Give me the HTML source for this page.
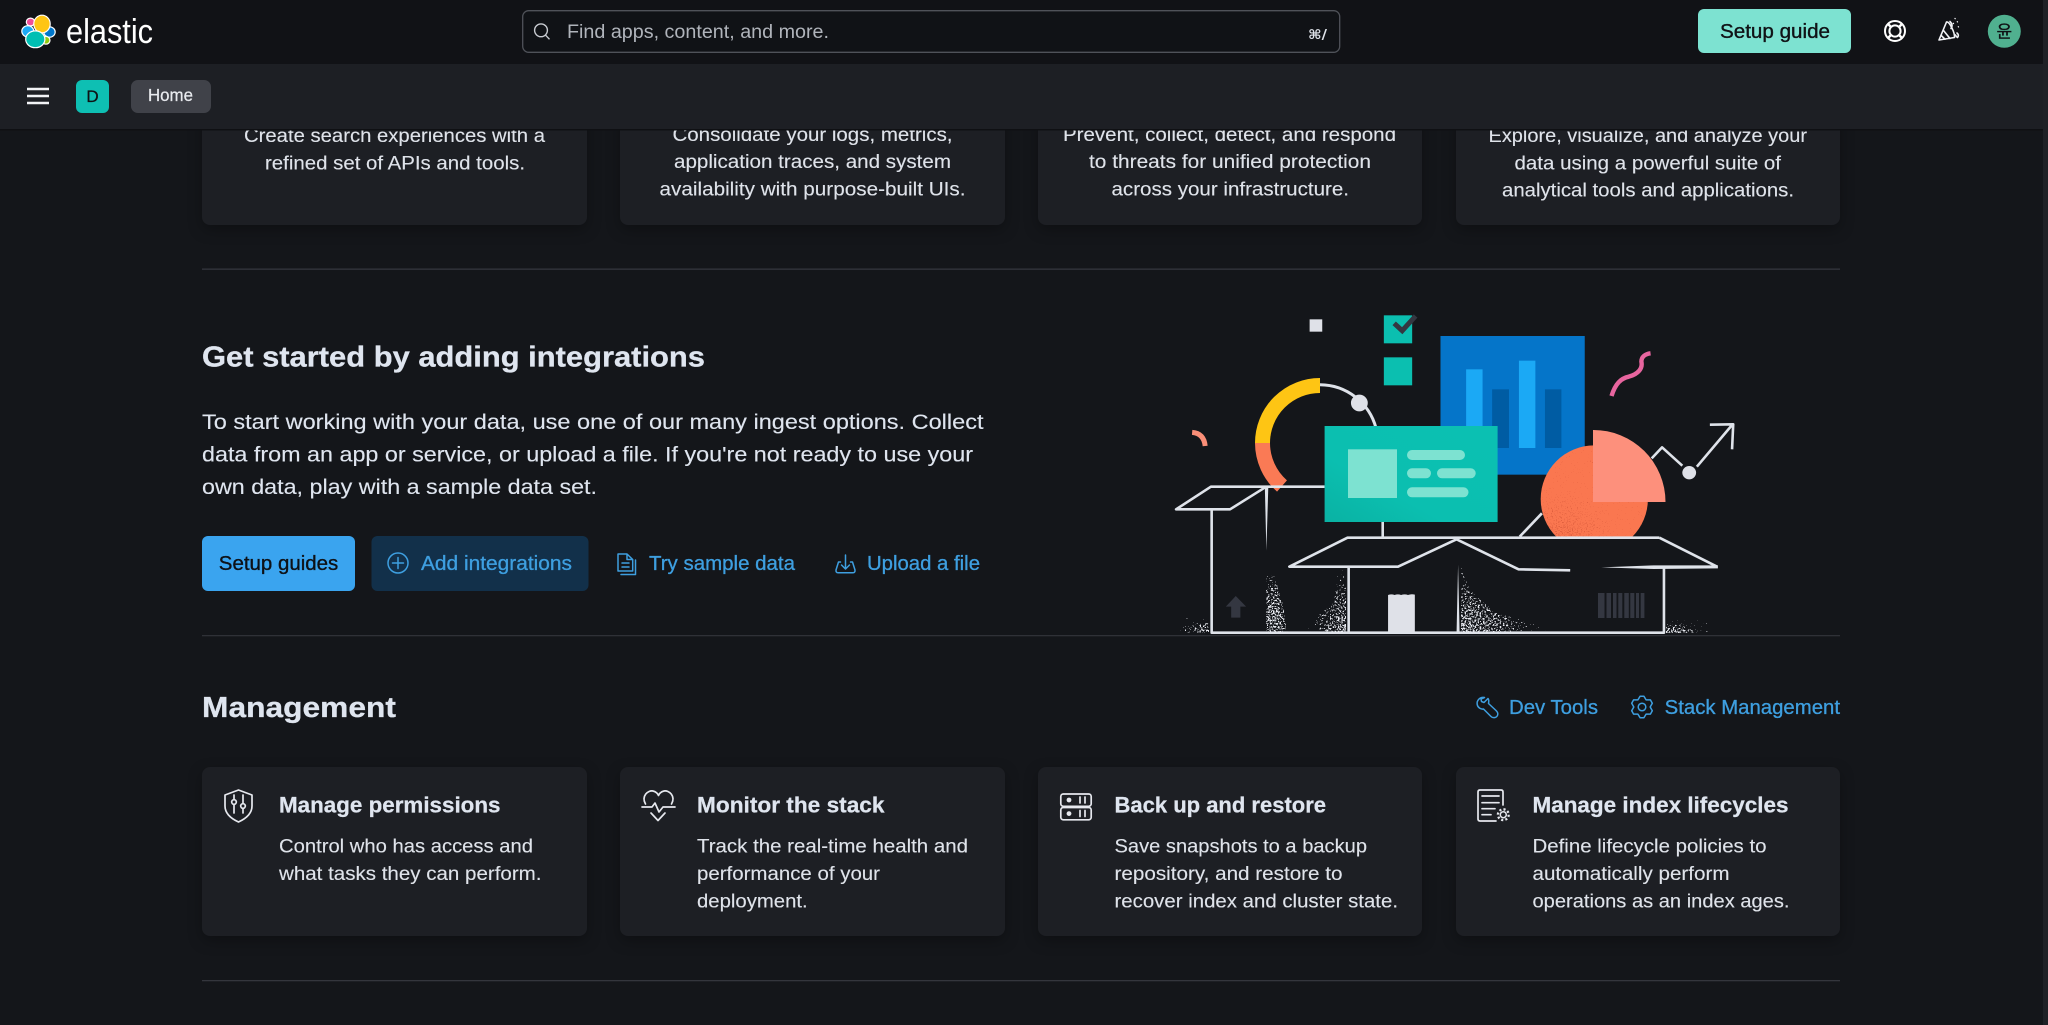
<!DOCTYPE html>
<html lang="en">
<head>
<meta charset="utf-8">
<title>Elastic Home</title>
<style>
html,body{margin:0;padding:0;background:#14161a;width:2048px;height:1025px;overflow:hidden}
svg{display:block;filter:blur(.3px)}
text{font-family:"Liberation Sans","Noto Sans CJK KR",sans-serif;white-space:pre}
.b{font-size:19px;fill:#dfe3ea;stroke:#dfe3ea;stroke-width:.12}
.p{font-size:21.5px;fill:#dfe5ef;stroke:#dfe5ef;stroke-width:.12}
.h{font-size:29px;font-weight:700;fill:#dfe5ef;stroke:#dfe5ef;stroke-width:.3}
.t{font-size:22px;font-weight:700;fill:#dfe5ef;stroke:#dfe5ef;stroke-width:.25}
.l{font-size:20px;fill:#3e9fe0;stroke:#3e9fe0;stroke-width:.3}
.ic{fill:none;stroke:#3e9fe0;stroke-width:1.5;stroke-linejoin:round;stroke-linecap:round}
.w{fill:none;stroke:#e6e8ee;stroke-width:1.7;stroke-linejoin:round;stroke-linecap:round}
.card{fill:#1d1f24;filter:drop-shadow(0 5px 7px rgba(0,0,0,.28))}
.art{fill:none;stroke:#dfe3ea;stroke-width:2.6;vector-effect:non-scaling-stroke;stroke-linejoin:round;stroke-linecap:butt}
.tp{fill:#dfe3ea}
</style>
</head>
<body>
<svg width="2048" height="1025" viewBox="0 0 2048 1025" xmlns="http://www.w3.org/2000/svg">
<defs>
<filter id="sp" x="0" y="0" width="1" height="1" color-interpolation-filters="sRGB">
<feTurbulence type="fractalNoise" baseFrequency=".6" numOctaves="2" seed="7" result="n"/>
<feColorMatrix in="n" type="matrix" values="0 0 0 0 1 0 0 0 0 1 0 0 0 0 1 1 0 0 0 0" result="a"/>
<feComposite in="a" in2="SourceGraphic" operator="arithmetic" k1="0" k2="1" k3="1" k4="-1" result="t"/>
<feComponentTransfer in="t" result="th"><feFuncA type="linear" slope="25"/></feComponentTransfer>
<feFlood flood-color="#e8eaf0"/>
<feComposite operator="in" in2="th"/>
</filter>
<filter id="spo" x="0" y="0" width="1" height="1" color-interpolation-filters="sRGB">
<feTurbulence type="fractalNoise" baseFrequency=".8" numOctaves="2" seed="4" result="n"/>
<feColorMatrix in="n" type="matrix" values="0 0 0 0 1 0 0 0 0 1 0 0 0 0 1 1 0 0 0 0" result="a"/>
<feComposite in="a" in2="SourceGraphic" operator="arithmetic" k1="0" k2="1" k3="1" k4="-1" result="t"/>
<feComponentTransfer in="t" result="th"><feFuncA type="linear" slope="25"/></feComponentTransfer>
<feFlood flood-color="#e0603f"/>
<feComposite operator="in" in2="th"/>
</filter>
<radialGradient id="rBR" cx="1" cy="1" r="1"><stop offset="0" stop-color="#fff" stop-opacity=".53"/><stop offset=".55" stop-color="#fff" stop-opacity=".41"/><stop offset="1" stop-color="#fff" stop-opacity=".25"/></radialGradient>
<radialGradient id="rBL" cx="0" cy="1" r="1"><stop offset="0" stop-color="#fff" stop-opacity=".53"/><stop offset=".55" stop-color="#fff" stop-opacity=".41"/><stop offset="1" stop-color="#fff" stop-opacity=".25"/></radialGradient>
<radialGradient id="rC" cx=".35" cy=".75" r=".85"><stop offset="0" stop-color="#fff" stop-opacity=".52"/><stop offset=".6" stop-color="#fff" stop-opacity=".43"/><stop offset="1" stop-color="#fff" stop-opacity=".26"/></radialGradient>
<radialGradient id="gO" cx=".2" cy=".95" r=".55"><stop offset="0" stop-color="#fff" stop-opacity=".52"/><stop offset="1" stop-color="#fff" stop-opacity=".26"/></radialGradient>
<linearGradient id="gT" x1="0" y1="1" x2="1" y2="0"><stop offset="0" stop-color="#0ab2a3"/><stop offset=".35" stop-color="#0bbfb0"/><stop offset="1" stop-color="#0bc0b2"/></linearGradient>
<clipPath id="orClip"><rect x="1500" y="400" width="200" height="137"/></clipPath>
</defs>

<rect width="2048" height="1025" fill="#14161a"/>

<!-- top feature cards -->
<rect class="card" x="202" y="90" width="385" height="135" rx="8"/>
<rect class="card" x="620" y="90" width="385" height="135" rx="8"/>
<rect class="card" x="1038" y="90" width="384" height="135" rx="8"/>
<rect class="card" x="1456" y="90" width="384" height="135" rx="8"/>

<text class="b" x="244" y="142" textLength="301" lengthAdjust="spacingAndGlyphs">Create search experiences with a</text>
<text class="b" x="265" y="169.5" textLength="260" lengthAdjust="spacingAndGlyphs">refined set of APIs and tools.</text>
<text class="b" x="672.5" y="141" textLength="280" lengthAdjust="spacingAndGlyphs">Consolidate your logs, metrics,</text>
<text class="b" x="674" y="168" textLength="277" lengthAdjust="spacingAndGlyphs">application traces, and system</text>
<text class="b" x="659.5" y="195.5" textLength="306" lengthAdjust="spacingAndGlyphs">availability with purpose-built UIs.</text>
<text class="b" x="1063" y="141" textLength="333" lengthAdjust="spacingAndGlyphs">Prevent, collect, detect, and respond</text>
<text class="b" x="1089" y="168" textLength="282" lengthAdjust="spacingAndGlyphs">to threats for unified protection</text>
<text class="b" x="1111.5" y="195.5" textLength="237.5" lengthAdjust="spacingAndGlyphs">across your infrastructure.</text>
<text class="b" x="1488.5" y="142" textLength="318.5" lengthAdjust="spacingAndGlyphs">Explore, visualize, and analyze your</text>
<text class="b" x="1514.5" y="169.5" textLength="266.5" lengthAdjust="spacingAndGlyphs">data using a powerful suite of</text>
<text class="b" x="1502" y="196.7" textLength="292" lengthAdjust="spacingAndGlyphs">analytical tools and applications.</text>

<!-- header -->
<rect x="0" y="0" width="2043" height="64" fill="#111216"/>
<rect x="0" y="64" width="2043" height="65" fill="#1d1f24"/>
<rect x="0" y="129" width="2043" height="1.5" fill="#0f1013"/>
<rect x="2043" y="0" width="5" height="1025" fill="#1f2126"/>

<!-- logo -->
<g stroke="#fff" stroke-width="1.2">
<ellipse cx="30.5" cy="22" rx="4.2" ry="3.9" fill="#f04e98"/>
<ellipse cx="27.8" cy="31.3" rx="6" ry="5.6" fill="#1ba9f5"/>
<ellipse cx="49.5" cy="32" rx="5.7" ry="5.2" fill="#0077cc"/>
<ellipse cx="46" cy="40.3" rx="4" ry="3.9" fill="#93c90e"/>
<ellipse cx="42" cy="24" rx="8.2" ry="8.8" fill="#fec514"/>
<ellipse cx="35.3" cy="39.3" rx="9.6" ry="8.4" fill="#00bfb3"/>
</g>
<text x="66" y="43" font-size="34" fill="#fff" textLength="87" lengthAdjust="spacingAndGlyphs">elastic</text>

<!-- search -->
<rect x="522.7" y="10.7" width="817" height="41.6" rx="6" fill="#101216" stroke="#4f5259" stroke-width="1.3"/>
<circle cx="541" cy="30.3" r="6.4" fill="none" stroke="#c8cbd1" stroke-width="1.4"/>
<path d="M545.6 35.2L549.5 39.3" stroke="#c8cbd1" stroke-width="1.4" fill="none"/>
<text x="567" y="38" font-size="19" fill="#b0b4bb" textLength="262" lengthAdjust="spacingAndGlyphs">Find apps, content, and more.</text>
<text x="1308" y="39" font-size="13" font-weight="700" fill="#dfe3ea" style="font-family:'DejaVu Sans',sans-serif" textLength="19" lengthAdjust="spacingAndGlyphs">⌘/</text>

<!-- header right -->
<rect x="1698" y="9" width="153" height="44" rx="6" fill="#7de2d1"/>
<text x="1720" y="38" font-size="20" fill="#101216" stroke="#101216" stroke-width=".35" textLength="110" lengthAdjust="spacingAndGlyphs">Setup guide</text>
<g fill="none" stroke="#fff" stroke-width="2">
<circle cx="1895" cy="31" r="10"/>
<circle cx="1895" cy="31" r="5.6"/>
<path d="M1888 24L1891 27M1902 24L1899 27M1888 38L1891 35M1902 38L1899 35" stroke-width="2.4"/>
</g>
<g fill="none" stroke="#f2f3f6" stroke-width="1.6" stroke-linejoin="round" stroke-linecap="round">
<path d="M1939 40L1946.5 22C1949.5 21 1955 33 1954.5 37.5Z"/>
<path d="M1943.5 30.5L1950 38.5M1941.2 35.5L1945 39.2"/>
<path d="M1950 21.5Q1953.5 25 1951 28.5M1957 33Q1959.5 35 1957.5 37.5Q1956 36.5 1955.5 35"/>
<path d="M1953.3 23.3L1953.5 23.5M1957.3 21.7L1957.5 21.9M1958.3 26.7L1958.5 26.9M1955 18.5L1955.2 18.7" stroke-width="1.3"/>
</g>
<circle cx="2004.3" cy="31.3" r="16.5" fill="#50b08f"/>
<text x="2004.3" y="37.3" font-size="17" text-anchor="middle" fill="#0f1114" stroke="#0f1114" stroke-width=".3" style="font-family:'Noto Sans CJK KR',sans-serif">윤</text>

<!-- subnav -->
<path d="M27 89H49M27 96H49M27 103H49" stroke="#f2f3f6" stroke-width="2.6" fill="none"/>
<rect x="76" y="80" width="33" height="33" rx="6" fill="#0ebfb3"/>
<text x="92.5" y="102" font-size="17" text-anchor="middle" fill="#0f1114" stroke="#0f1114" stroke-width=".3">D</text>
<rect x="131" y="80" width="80" height="33" rx="7" fill="#404249"/>
<text x="148" y="101" font-size="17.5" fill="#e8eaee" stroke="#e8eaee" stroke-width=".25" textLength="45" lengthAdjust="spacingAndGlyphs">Home</text>

<!-- dividers -->
<rect x="202" y="268.5" width="1638" height="1.3" fill="#34363d"/>
<rect x="202" y="635" width="1638" height="1.3" fill="#2f3137"/>
<rect x="202" y="980" width="1638" height="1.3" fill="#34363d"/>

<!-- integrations section -->
<text class="h" x="202" y="366.5" textLength="503" lengthAdjust="spacingAndGlyphs">Get started by adding integrations</text>
<text class="p" x="202" y="429" textLength="781.5" lengthAdjust="spacingAndGlyphs">To start working with your data, use one of our many ingest options. Collect</text>
<text class="p" x="202" y="461.5" textLength="771" lengthAdjust="spacingAndGlyphs">data from an app or service, or upload a file. If you're not ready to use your</text>
<text class="p" x="202" y="494" textLength="395" lengthAdjust="spacingAndGlyphs">own data, play with a sample data set.</text>

<rect x="202" y="536" width="153" height="55" rx="6" fill="#3aa4ef"/>
<text x="218.8" y="570" font-size="20" fill="#0e1116" stroke="#0e1116" stroke-width=".35" textLength="119.5" lengthAdjust="spacingAndGlyphs">Setup guides</text>
<rect x="371.5" y="536" width="217" height="55" rx="6" fill="#12304a"/>
<circle class="ic" cx="398" cy="563" r="10"/>
<path class="ic" d="M398 557.5V568.5M392.5 563H403.5"/>
<text class="l" x="421" y="570" textLength="151" lengthAdjust="spacingAndGlyphs">Add integrations</text>
<path class="ic" d="M618 554H627L632.7 559.5V571H618ZM627 554V559.5H632.7M622 563H629M622 567H629M635.5 560V574.5H621"/>
<text class="l" x="649" y="570" textLength="146" lengthAdjust="spacingAndGlyphs">Try sample data</text>
<path class="ic" d="M840.5 562H838.5L836 570Q835.8 572.8 838 572.8H853Q855.2 572.8 855 570L852.5 562H850.5M845.5 555V569M841.5 565L845.5 569L849.5 565"/>
<text class="l" x="867" y="570" textLength="113" lengthAdjust="spacingAndGlyphs">Upload a file</text>

<!-- illustration (real-pixel parts) -->
<path d="M1320 384.7A58.3 58.3 0 0 1 1376 428" fill="none" stroke="#dfe3ea" stroke-width="3"/>
<g transform="translate(1160,300) scale(.38265,.33333)">
<rect x="391" y="58" width="33" height="37" fill="#dfe1e8"/>
<rect x="585" y="46" width="74" height="84" fill="#0bbfb0"/>
<rect x="585" y="172" width="74" height="84" fill="#0bbfb0"/>
<path d="M612 70L633 92L668 48" fill="none" stroke="#343741" stroke-width="5" vector-effect="non-scaling-stroke"/>
<rect x="733" y="108" width="377" height="416" fill="#0575c9"/>
<rect x="800" y="208" width="43" height="236" fill="#1ba9f5"/>
<rect x="868" y="268" width="44" height="176" fill="#005ca3"/>
<rect x="938" y="182" width="43" height="262" fill="#1ba9f5"/>
<rect x="1006" y="268" width="43" height="176" fill="#005ca3"/>
<ellipse cx="521" cy="309" rx="22" ry="25" fill="#dfe1e8"/>
<path d="M1180 288C1190 250 1205 235 1225 230C1250 222 1262 205 1258 185C1258 170 1268 162 1282 160" fill="none" stroke="#e8659f" stroke-width="4.4" vector-effect="non-scaling-stroke"/>
<path d="M84 397Q115 400 118 438" fill="none" stroke="#fa8f78" stroke-width="5" vector-effect="non-scaling-stroke"/>
</g>
<path d="M1320 385.5A57.5 57.5 0 0 0 1262.5 443" fill="none" stroke="#fec514" stroke-width="15"/>
<path d="M1262.5 443A57.5 57.5 0 0 0 1282 486" fill="none" stroke="#fa7a55" stroke-width="15"/>
<!-- orange & salmon -->
<g clip-path="url(#orClip)">
<ellipse cx="1594.3" cy="499" rx="53.6" ry="53.6" fill="#fa7750"/>
<ellipse cx="1594.3" cy="499" rx="53.6" ry="53.6" fill="url(#gO)" filter="url(#spo)"/>
</g>
<path d="M1593 502V430A72 72 0 0 1 1665.5 502Z" fill="#fd907c"/>
<!-- teal card -->
<rect x="1324.6" y="426" width="173" height="96" fill="url(#gT)"/>
<g fill="#7de2d1">
<rect x="1348" y="449.3" width="49" height="48.7"/>
<rect x="1407" y="450" width="58" height="10" rx="5"/>
<rect x="1407" y="468.3" width="24" height="10" rx="5"/>
<rect x="1437" y="468.3" width="38.7" height="10" rx="5"/>
<rect x="1407" y="487.3" width="61.5" height="10" rx="5"/>
</g>
<!-- line art -->
<g transform="translate(1160,300) scale(.38265,.33333)">
<path class="art" d="M430 560H133L42 628H183L275 562M135 630V998H1317V804"/>
<polygon class="tp" points="274,562 283,562 278,752"/>
<path class="art" d="M582 666V713"/>
<path class="art" d="M940 710L998 640"/>
<path class="art" d="M1305 713H490L338 800H622L775 718L937 808L1072 811"/>
<path class="art" d="M1305 713L1456 800"/>
<polygon class="tp" points="1153,802 1290,796 1458,796 1458,805 1290,807"/>
<path class="art" d="M493 804V998"/>
<polygon class="tp" points="779,794 783,998 775,998"/>
<path class="art" d="M1285 475L1312 442L1365 497M1403 500L1495 375M1437 374L1498 373L1495 448"/>
<ellipse cx="1383" cy="518" rx="18" ry="20" fill="#dfe1e8"/>
<path d="M596 885Q605 881 613 885Q622 881 630 885Q640 881 648 885Q657 881 666 884V995H596Z" fill="#dfe1e8"/>
<polygon points="198,888 225,920 210,920 210,953 186,953 186,920 172,920" fill="#343741"/>
</g>
<g fill="#343741">
<rect x="1598" y="593" width="6.5" height="25"/><rect x="1606.5" y="593" width="4.5" height="25"/><rect x="1613" y="593" width="3.5" height="25"/><rect x="1618.3" y="593" width="4" height="25"/><rect x="1624.3" y="593" width="4.5" height="25"/><rect x="1630.3" y="593" width="4" height="25"/><rect x="1636" y="593" width="3" height="25"/><rect x="1640.7" y="593" width="3.7" height="25"/>
</g>
<!-- speckles -->
<rect x="1180" y="618" width="29" height="14.5" fill="url(#rBR)" filter="url(#sp)"/>
<polygon points="1266,575 1274,575 1282,600 1288,632.5 1266,632.5" fill="url(#rC)" filter="url(#sp)"/>
<polygon points="1346,568 1338,568 1334,600 1308,626 1308,632.5 1346,632.5" fill="url(#rBR)" filter="url(#sp)"/>
<polygon points="1461,565 1470,590 1495,612 1546,628 1546,632.5 1461,632.5" fill="url(#rBL)" filter="url(#sp)"/>
<rect x="1666" y="620" width="44" height="13" fill="url(#rBL)" filter="url(#sp)"/>

<!-- management -->
<text class="h" x="202" y="717" textLength="194" lengthAdjust="spacingAndGlyphs">Management</text>
<path class="ic" d="M1484.5 697.5C1480 696.5 1476.5 700.5 1477.2 704.5C1477.8 707.8 1481 709.5 1483.5 709L1491 716.5C1493 718.5 1497.5 718 1497.8 714C1498 712.5 1497 711.5 1496 710.5L1488.5 703.5C1489 701 1488.8 699.5 1488 698.5L1484 702.5L1481.5 701.5L1481 699Z"/>
<text class="l" x="1509" y="714" textLength="89" lengthAdjust="spacingAndGlyphs">Dev Tools</text>
<g transform="translate(1642,707)">
<path class="ic" d="M-1.9 -10.8L1.9 -10.8L4.1 -7.1L8.4 -7.1L10.3 -3.8L8.2 0L10.3 3.8L8.4 7.1L4.1 7.1L1.9 10.8L-1.9 10.8L-4.1 7.1L-8.4 7.1L-10.3 3.8L-8.2 0L-10.3 -3.8L-8.4 -7.1L-4.1 -7.1Z"/>
<circle class="ic" cx="0" cy="0" r="3.8"/>
</g>
<text class="l" x="1664.7" y="714" textLength="175.3" lengthAdjust="spacingAndGlyphs">Stack Management</text>

<rect class="card" x="202" y="767" width="385" height="169" rx="8"/>
<rect class="card" x="620" y="767" width="385" height="169" rx="8"/>
<rect class="card" x="1038" y="767" width="384" height="169" rx="8"/>
<rect class="card" x="1456" y="767" width="384" height="169" rx="8"/>

<!-- shield -->
<path class="w" d="M238.5 790L252 795V806C252 814 245 819 238.5 822C232 819 225 814 225 806V795Z"/>
<path class="w" d="M234 795V799M234 805V813M243 795V803M243 809V813" stroke-width="1.3"/>
<circle class="w" cx="234" cy="802" r="2.3" stroke-width="1.3"/>
<circle class="w" cx="243" cy="806" r="2.3" stroke-width="1.3"/>
<!-- heart -->
<path class="w" d="M645.5 804C641 796 648 790 653 791C656 791.5 658 794 658.5 795.5C659 794 661 791.5 664 791C669 790 676 796 671.5 804"/>
<path class="w" d="M642 807H652L655 803L659 812L663 807H675M651 813L658 820.5L665 813"/>
<!-- server -->
<g class="w">
<rect x="1060.8" y="794" width="30.4" height="12.3" rx="2.5"/>
<rect x="1060.8" y="807.5" width="30.4" height="12.3" rx="2.5"/>
<path d="M1080 797V803M1085 797V803M1080 810.5V816.5M1085 810.5V816.5"/>
</g>
<circle cx="1069" cy="800" r="2.4" fill="#e6e8ee"/>
<circle cx="1069" cy="813.6" r="2.4" fill="#e6e8ee"/>
<!-- doc gear -->
<path class="w" d="M1496 821H1480Q1478 821 1478 819V792Q1478 790 1480 790H1501Q1503 790 1503 792V805"/>
<path class="w" d="M1482 796H1499M1482 802.7H1499M1482 808.7H1495M1482 814.7H1491"/>
<circle cx="1503.3" cy="814.7" r="3" fill="none" stroke="#e6e8ee" stroke-width="1.5"/>
<circle cx="1503.3" cy="814.7" r="5.4" fill="none" stroke="#e6e8ee" stroke-width="2.3" stroke-dasharray="2.1 2.14"/>

<text class="t" x="279" y="812.3" textLength="221.5" lengthAdjust="spacingAndGlyphs">Manage permissions</text>
<text class="b" x="279" y="852.7" textLength="254" lengthAdjust="spacingAndGlyphs">Control who has access and</text>
<text class="b" x="279" y="880" textLength="262.5" lengthAdjust="spacingAndGlyphs">what tasks they can perform.</text>

<text class="t" x="697" y="812.3" textLength="187.5" lengthAdjust="spacingAndGlyphs">Monitor the stack</text>
<text class="b" x="697" y="852.7" textLength="271" lengthAdjust="spacingAndGlyphs">Track the real-time health and</text>
<text class="b" x="697" y="880" textLength="183" lengthAdjust="spacingAndGlyphs">performance of your</text>
<text class="b" x="697" y="907.3" textLength="110.7" lengthAdjust="spacingAndGlyphs">deployment.</text>

<text class="t" x="1114.5" y="812.3" textLength="211.5" lengthAdjust="spacingAndGlyphs">Back up and restore</text>
<text class="b" x="1114.5" y="852.7" textLength="252.5" lengthAdjust="spacingAndGlyphs">Save snapshots to a backup</text>
<text class="b" x="1114.5" y="880" textLength="228" lengthAdjust="spacingAndGlyphs">repository, and restore to</text>
<text class="b" x="1114.5" y="907.3" textLength="283.5" lengthAdjust="spacingAndGlyphs">recover index and cluster state.</text>

<text class="t" x="1532.5" y="812.3" textLength="256" lengthAdjust="spacingAndGlyphs">Manage index lifecycles</text>
<text class="b" x="1532.5" y="852.7" textLength="234" lengthAdjust="spacingAndGlyphs">Define lifecycle policies to</text>
<text class="b" x="1532.5" y="880" textLength="197" lengthAdjust="spacingAndGlyphs">automatically perform</text>
<text class="b" x="1532.5" y="907.3" textLength="257" lengthAdjust="spacingAndGlyphs">operations as an index ages.</text>
</svg>
</body>
</html>
